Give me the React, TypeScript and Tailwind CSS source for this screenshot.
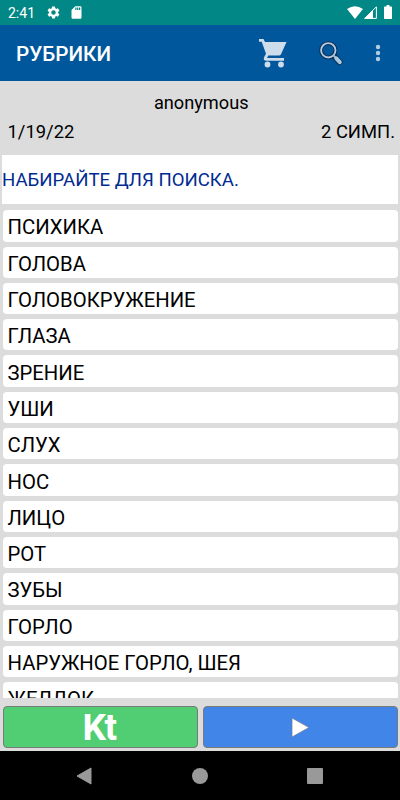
import React from 'react';

const rubrics = [
  'ПСИХИКА',
  'ГОЛОВА',
  'ГОЛОВОКРУЖЕНИЕ',
  'ГЛАЗА',
  'ЗРЕНИЕ',
  'УШИ',
  'СЛУХ',
  'НОС',
  'ЛИЦО',
  'РОТ',
  'ЗУБЫ',
  'ГОРЛО',
  'НАРУЖНОЕ ГОРЛО, ШЕЯ',
  'ЖЕЛДОК',
];

function StatusBar() {
  return (
    <div className="flex h-[24.5px] shrink-0 items-center bg-[#018786] pl-2 pr-[8px] text-white">
      <span className="w-[40px] pt-px text-[14px] leading-4">2:41</span>
      <svg className="-ml-[2px] h-[15px] w-[15px]" viewBox="0 0 24 24" fill="currentColor">
        <path d="M19.14 12.94c.04-.3.06-.61.06-.94 0-.32-.02-.64-.07-.94l2.03-1.58a.49.49 0 0 0 .12-.61l-1.92-3.32a.49.49 0 0 0-.59-.22l-2.39.96c-.5-.38-1.03-.7-1.62-.94l-.36-2.54a.48.48 0 0 0-.48-.41h-3.84a.47.47 0 0 0-.47.41l-.36 2.54c-.59.24-1.13.57-1.62.94l-2.39-.96a.48.48 0 0 0-.59.22L2.74 8.87a.47.47 0 0 0 .12.61l2.03 1.58c-.05.3-.09.63-.09.94s.02.64.07.94l-2.03 1.58a.49.49 0 0 0-.12.61l1.92 3.32c.12.22.37.29.59.22l2.39-.96c.5.38 1.03.7 1.62.94l.36 2.54c.05.24.24.41.48.41h3.84c.24 0 .44-.17.47-.41l.36-2.54c.59-.24 1.13-.56 1.62-.94l2.39.96c.22.08.47 0 .59-.22l1.92-3.32a.47.47 0 0 0-.12-.61l-2.01-1.58zM12 15.6A3.6 3.6 0 1 1 12 8.4a3.6 3.6 0 0 1 0 7.2z" />
      </svg>
      <svg className="ml-[8px] h-[15px] w-[15px]" viewBox="0 0 24 24" fill="currentColor">
        <path d="M18 2h-8L4 8v12c0 1.100.9 2 2 2h12c1.100 0 2-.9 2-2V4c0-1.100-.9-2-2-2zm-6 6h-2V4h2v4zm3 0h-2V4h2v4zm3 0h-2V4h2v4z" />
      </svg>
      <svg className="ml-auto h-[13px] w-[16px]" viewBox="0 0 16 13" fill="currentColor">
        <path d="M0 3Q8-2.500 16 3L8 13Z" />
      </svg>
      <svg className="ml-px h-[13px] w-[13px]" viewBox="0 0 13 13">
        <path d="M12.400.8V12.400H.8Z" fill="none" stroke="white" />
        <path d="M9 4V13H0Z" fill="white" />
      </svg>
      <svg className="ml-[7px] h-[14px] w-[8px]" viewBox="0 0 8 14" fill="currentColor">
        <path d="M2.500 0h3v1.500H7.300Q8 1.500 8 2.200V13.300Q8 14 7.300 14H.7Q0 14 0 13.300V2.200Q0 1.500.7 1.500H2.500Z" />
      </svg>
    </div>
  );
}

function AppBar() {
  return (
    <div className="flex h-[56.5px] shrink-0 items-center bg-[#01579b] pl-4 pr-[19.5px]">
      <h1 className="flex-1 pt-[3px] text-[20.7px] font-medium text-white">РУБРИКИ</h1>
      <svg className="mt-px h-[29px] w-[28px]" viewBox="0 0 28 29" fill="#cdddeb">
        <path d="M0 0H4.500L6 3H27.500L22 15.200Q21.300 16.500 20 16.500H9.300L8 19H25V21.800H7.500Q3.600 21.500 5.200 18L7 14.800 2.700 2.800H0Z" />
        <circle cx="8.500" cy="25.500" r="2.900" />
        <circle cx="22" cy="25.500" r="2.900" />
      </svg>
      <svg className="ml-[32px] mt-px h-[25px] w-[25px]" viewBox="0 0 25 25" fill="none">
        <circle cx="9.300" cy="9.300" r="7.200" stroke="#092d58" strokeWidth="3.800" />
        <path d="M15.500 15.500L20.700 21.200" stroke="#092d58" strokeWidth="5.800" strokeLinecap="round" />
        <circle cx="9.300" cy="9.300" r="7.200" stroke="#b4c9dc" strokeWidth="1.900" />
        <path d="M14 14L17 17" stroke="#9cbbd5" strokeWidth="2" />
        <path d="M17.300 17.300L20.800 21.200" stroke="#a8c8de" strokeWidth="4" strokeLinecap="round" />
      </svg>
      <svg className="ml-[31px] mt-px h-[18px] w-[6px]" viewBox="0 0 6 18" fill="#b3cde1">
        <circle cx="3" cy="3" r="2.200" />
        <circle cx="3" cy="9" r="2.200" />
        <circle cx="3" cy="15" r="2.200" />
      </svg>
    </div>
  );
}

export default function App() {
  return (
    <div className="flex h-[800px] w-[400px] flex-col overflow-hidden bg-[#dcdcdc] font-['Roboto',sans-serif] text-black">
      <StatusBar />
      <AppBar />
      <div className="h-[74px] shrink-0 pl-[7.5px] pr-[5px] pt-[10px] text-[18.2px]">
        <div className="text-center leading-[24px]">anonymous</div>
        <div className="mt-[5px] flex justify-between text-[18.4px] leading-[24px]">
          <span>1/19/22</span>
          <span>2 СИМП.</span>
        </div>
      </div>
      <div className="mx-[2px] flex h-[49px] shrink-0 items-center bg-white pt-[3px] text-[18.6px] text-[#002b91]">
        НАБИРАЙТЕ ДЛЯ ПОИСКА.
      </div>
      <div className="mt-[6.300px] flex min-h-0 flex-1 flex-col gap-[5px] overflow-hidden pl-[3px] pr-[2px]">
        {rubrics.map((name) => (
          <div key={name} className="flex h-[31.3px] shrink-0 items-center rounded-[4px] bg-white pl-[4.500px] pt-[3px] text-[20.3px] leading-[30px]">
            {name}
          </div>
        ))}
      </div>
      <div className="grid h-[53px] shrink-0 grid-cols-2 gap-[5px] pb-[3px] pl-[3px] pr-[2px] pt-[8px]">
        <button className="flex items-center justify-center rounded-[4px] border border-[#777b77] bg-[#51cd73] pr-[3px] pt-px text-[37px] font-bold leading-none tracking-[-1.5px] text-white">
          Kt
        </button>
        <button className="flex items-center justify-center rounded-[4px] border border-[#7b7b75] bg-[#4285e8]" aria-label="Play">
          <svg className="h-[21px] w-[19px]" viewBox="0 0 19 21">
            <path d="M1 1L18 10.500 1 20Z" fill="white" stroke="#667894" strokeWidth=".7" />
          </svg>
        </button>
      </div>
      <div className="flex h-[49px] shrink-0 items-center bg-black pl-[76px]">
        <svg className="h-[18px] w-[16px]" viewBox="0 0 16 18"><path d="M15 1V17L1 9Z" fill="#999" stroke="#999" strokeLinejoin="round" /></svg>
        <div className="ml-[100px] h-[16px] w-[16px] rounded-full bg-[#999]" />
        <div className="ml-[99px] h-[16px] w-[16px] rounded-[1px] bg-[#999]" />
      </div>
    </div>
  );
}
